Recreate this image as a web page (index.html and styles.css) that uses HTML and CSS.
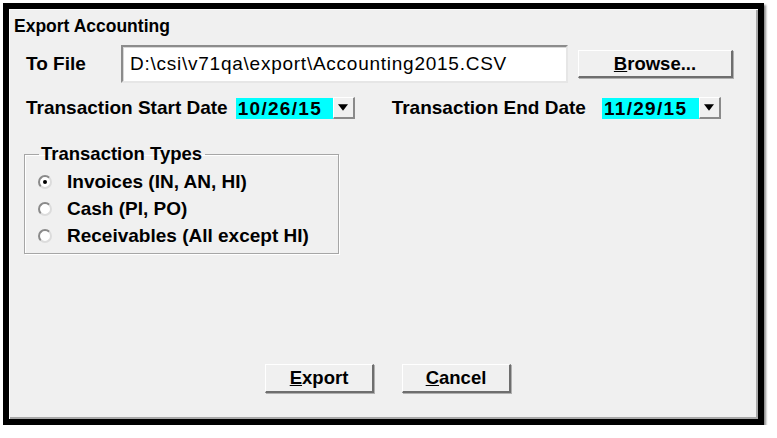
FILE: index.html
```html
<!DOCTYPE html>
<html>
<head>
<meta charset="utf-8">
<link rel="stylesheet" href="styles.css">
</head>
<body>
<div class="dialog">
  <div class="title">Export Accounting</div>
  <div class="file-row">
    <span class="label file-label">To File</span>
    <div class="textbox">D:\csi\v71qa\export\Accounting2015.CSV</div>
    <button class="btn browse"><u>B</u>rowse...</button>
  </div>
  <div class="date-row">
    <span class="label">Transaction Start Date</span>
    <span class="date">10/26/15</span>
    <span class="drop"><svg width="9" height="6" viewBox="0 0 9 6"><path d="M0 0H9L4.5 6Z" fill="#000"/></svg></span>
    <span class="label end-label">Transaction End Date</span>
    <span class="date date-end">11/29/15</span>
    <span class="drop"><svg width="9" height="6" viewBox="0 0 9 6"><path d="M0 0H9L4.5 6Z" fill="#000"/></svg></span>
  </div>
  <fieldset class="group">
    <legend>Transaction Types</legend>
    <div class="radio"><span class="dot checked"></span><span>Invoices (IN, AN, HI)</span></div>
    <div class="radio"><span class="dot"></span><span>Cash (PI, PO)</span></div>
    <div class="radio"><span class="dot"></span><span>Receivables (All except HI)</span></div>
  </fieldset>
  <div class="spacer"></div>
  <div class="actions">
    <button class="btn action"><u>E</u>xport</button>
    <button class="btn action"><u>C</u>ancel</button>
  </div>
</div>
</body>
</html>
```

FILE: styles.css
```css
html, body {
  margin: 0;
  padding: 0;
  background: #ffffff;
}
body {
  font-family: "Liberation Sans", Arial, sans-serif;
  font-size: 19px;
  color: #000;
}
.dialog {
  box-sizing: border-box;
  margin: 3px 0 0 3px;
  width: 761px;
  height: 422px;
  border: 6px solid #000;
  background: #f0f0f0;
  box-shadow: 2px 2px 2px rgba(0,0,0,0.45), inset 1px 1px 0 #fdfdfd, inset -2px -2px 0 #a8a8a8;
  display: flex;
  flex-direction: column;
}
.title {
  font-weight: bold;
  font-size: 17.5px;
  padding: 7px 0 0 5px;
  height: 24px;
  box-sizing: border-box;
  line-height: 20px;
}
.label {
  font-weight: bold;
  font-size: 19px;
  white-space: nowrap;
}
.file-row {
  display: flex;
  align-items: center;
  margin-top: 12px;
  padding-left: 17px;
  height: 38px;
}
.file-label {
  width: 95px;
}
.textbox {
  box-sizing: border-box;
  width: 447px;
  height: 38px;
  background: #fff;
  border-style: solid;
  border-width: 2px;
  border-color: #8c8c8c #e6e6e6 #e6e6e6 #8c8c8c;
  box-shadow: inset 1px 1px 0 #d8d8d8;
  padding: 0 0 0 7px;
  display: flex;
  align-items: center;
  font-size: 19px;
  letter-spacing: 0.75px;
  white-space: nowrap;
}
.btn {
  font-family: "Liberation Sans", Arial, sans-serif;
  font-weight: bold;
  font-size: 18.5px;
  color: #000;
  background: #f0f0f0;
  border-style: solid;
  border-width: 1px 2px 2px 1px;
  border-color: #ffffff #6e6e6e #6e6e6e #ffffff;
  box-shadow: 1px 1px 0 #b0b0b0;
  padding: 0;
  box-sizing: border-box;
}
.browse {
  width: 155px;
  height: 28px;
  margin-left: 10px;
}
.date-row {
  display: flex;
  align-items: center;
  margin-top: 14px;
  padding-left: 17px;
  height: 22px;
}
.date {
  box-sizing: border-box;
  width: 97px;
  height: 21px;
  background: #00ffff;
  font-weight: bold;
  font-size: 19px;
  letter-spacing: 1.3px;
  padding-left: 2px;
  line-height: 21px;
  margin-left: 8px;
}
.drop {
  box-sizing: border-box;
  width: 22px;
  height: 22px;
  background: #f0f0f0;
  border-style: solid;
  border-width: 1px 2px 2px 1px;
  border-color: #ffffff #8a8a8a #8a8a8a #ffffff;
  display: flex;
  align-items: center;
  justify-content: center;
}
.drop svg {
  width: 10px;
  height: 7px;
}
.end-label {
  margin-left: 37px;
}
.date-end {
  margin-left: 16px;
}
.group {
  box-sizing: border-box;
  margin: 25px 0 0 15px;
  width: 315px;
  height: 110px;
  border: 1px solid #a6a6a6;
  box-shadow: 1px 1px 0 #fff, inset 1px 1px 0 #fff;
  padding: 4px 0 0 13px;
  min-width: 0;
}
.group legend {
  font-weight: bold;
  font-size: 18.5px;
  padding: 0 3px 0 2px;
  margin-left: 1px;
  line-height: 20px;
}
.radio {
  display: flex;
  align-items: center;
  height: 27px;
  font-weight: bold;
  font-size: 19px;
  white-space: nowrap;
}
.dot {
  box-sizing: border-box;
  width: 14px;
  height: 14px;
  border-radius: 50%;
  background: #fff;
  border: 2px solid #8a8a8a;
  border-right-color: #dcdcdc;
  border-bottom-color: #dcdcdc;
  margin-right: 15px;
  display: flex;
  align-items: center;
  justify-content: center;
}
.dot.checked::after {
  content: "";
  width: 4px;
  height: 4px;
  border-radius: 50%;
  background: #000;
}
.spacer {
  flex: 1;
}
.actions {
  display: flex;
  justify-content: center;
  gap: 28px;
  padding-left: 135px;
  padding-right: 126px;
  margin-bottom: 26px;
}
.action {
  width: 109px;
  height: 29px;
}
```
